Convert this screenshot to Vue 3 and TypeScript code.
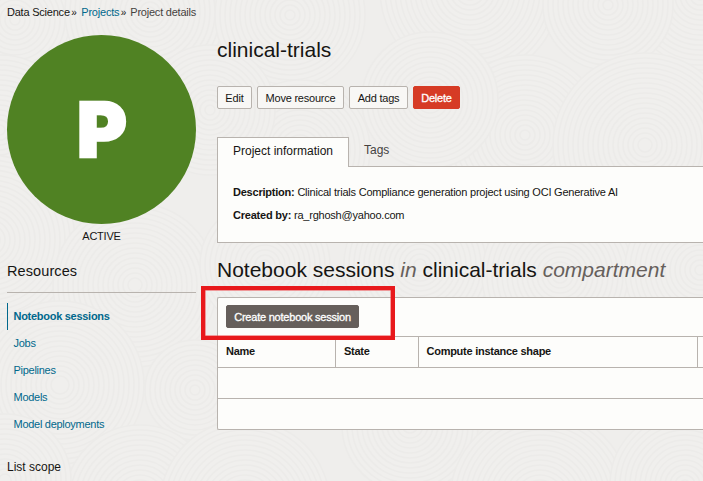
<script setup lang="ts">
interface Swirl { x: number; y: number; r: number }

const resources: string[] = ['Notebook sessions', 'Jobs', 'Pipelines', 'Models', 'Model deployments']
const actions: { label: string; kind: string }[] = [
  { label: 'Edit', kind: 'edit' },
  { label: 'Move resource', kind: 'move' },
  { label: 'Add tags', kind: 'tags' },
  { label: 'Delete', kind: 'danger' },
]
const columns: string[] = ['Name', 'State', 'Compute instance shape', '']

const swirls: Swirl[] = [
  { x: 15, y: 20, r: 80 }, { x: 150, y: 12, r: 85 }, { x: 290, y: 15, r: 75 }, { x: 470, y: -10, r: 90 },
  { x: 700, y: -5, r: 80 }, { x: 608, y: 5, r: 65 }, { x: 525, y: 135, r: 80 }, { x: 645, y: 145, r: 92 },
  { x: 430, y: 100, r: 68 }, { x: 300, y: 150, r: 70 }, { x: 210, y: 110, r: 65 }, { x: 0, y: 130, r: 75 },
  { x: -10, y: 240, r: 85 }, { x: 135, y: 285, r: 82 }, { x: 265, y: 265, r: 65 }, { x: 420, y: 265, r: 76 },
  { x: 560, y: 275, r: 78 }, { x: 700, y: 270, r: 75 }, { x: 60, y: 385, r: 84 }, { x: 195, y: 390, r: 50 },
  { x: 140, y: 500, r: 75 }, { x: 245, y: 505, r: 85 }, { x: 410, y: 425, r: 68 }, { x: 540, y: 500, r: 90 },
  { x: 685, y: 485, r: 75 }, { x: 5, y: 480, r: 66 },
]
const rings = (r: number): number[] => Array.from({ length: Math.floor(r / 5) }, (_, i) => r - i * 5)
</script>

<template>
  <div class="page">
    <svg class="texture" viewBox="0 0 703 481" aria-hidden="true">
      <g v-for="(s, i) in swirls" :key="i">
        <circle v-for="r in rings(s.r)" :key="r" :cx="s.x" :cy="s.y" :r="r" />
      </g>
    </svg>
    <nav class="crumbs">
      <span>Data Science</span><i>»</i><a>Projects</a><i>»</i><span class="here">Project details</span>
    </nav>
    <div class="body">
      <aside class="side">
        <div class="badge"><span>P</span></div>
        <div class="status">ACTIVE</div>
        <h2 class="side-title">Resources</h2>
        <ul class="menu">
          <li v-for="(r, i) in resources" :key="r" :class="{ active: i === 0 }"><a>{{ r }}</a></li>
        </ul>
        <h3 class="scope">List scope</h3>
      </aside>
      <main class="main">
        <h1 class="title">clinical-trials</h1>
        <div class="actions">
          <button v-for="a in actions" :key="a.label" class="btn" :class="a.kind">{{ a.label }}</button>
        </div>
        <div class="tabs">
          <div class="tab current">Project information</div>
          <div class="tab">Tags</div>
        </div>
        <section class="panel">
          <p><b>Description:</b> <span>Clinical trials Compliance generation project using OCI Generative AI</span></p>
          <p><b>Created by:</b> <span>ra_rghosh@yahoo.com</span></p>
        </section>
        <h2 class="heading">Notebook sessions <em>in</em> clinical-trials <em>compartment</em></h2>
        <section class="list">
          <div class="toolbar">
            <button class="btn create">Create notebook session</button>
            <div class="marker"></div>
          </div>
          <div class="row head"><div v-for="c in columns" :key="c" class="cell">{{ c }}</div></div>
          <div class="row"></div>
          <div class="row"></div>
        </section>
      </main>
    </div>
  </div>
</template>

<style>
body { margin: 0; overflow: hidden; background: #efeeec; }
</style>

<style scoped>
* { box-sizing: border-box; }
.page { position: relative; width: 703px; height: 481px; overflow: hidden; background: #efeeec; font: 11px/15px "Liberation Sans", Arial, sans-serif; letter-spacing: -.22px; color: #161513; }
.texture { position: absolute; inset: 0; width: 703px; height: 481px; }
.texture circle { fill: #f0efed; stroke: #ecebe9; stroke-width: 1.6; }
.crumbs { position: relative; display: flex; height: 35px; padding: 5px 0 0 7px; }
.crumbs i { font-style: normal; font-size: 10px; width: 11.5px; padding-left: 1.5px; }
.crumbs i:nth-of-type(2) { width: 11px; }
.crumbs .here { color: #45423f; }
a { color: #00688c; }
.body { position: relative; display: flex; gap: 21px; padding-left: 7px; width: 703px; }
.side { width: 189px; flex: none; }
.badge { display: flex; justify-content: center; align-items: center; width: 189px; height: 189px; padding: 0 0 2px 1px; border-radius: 50%; background: #508223; color: #fff; font: 900 76px/78px Inter, sans-serif; letter-spacing: 0; -webkit-text-stroke: 2.4px #fff; }
.status { text-align: center; margin-top: 5px; height: 15px; }
.side-title { margin: 17px 0 0; height: 32px; font-size: 14.5px; line-height: 20px; font-weight: 400; border-bottom: 1px solid #b8b3ae; letter-spacing: .1px; }
.menu { list-style: none; margin: 10px 0 0; padding: 0; letter-spacing: -.28px; }
.menu li { height: 27px; padding-left: 6.5px; line-height: 27px; }
.menu .active { border-left: 1px solid #00688c; padding-left: 5.5px; font-weight: 700; }
.scope { margin: 20px 0 0; font-size: 12px; line-height: 18px; font-weight: 400; letter-spacing: 0; }
.main { flex: 1; min-width: 0; }
.title { margin: 0; height: 51px; font-size: 21px; line-height: 30px; font-weight: 400; letter-spacing: 0; }
.actions { display: flex; gap: 5px; }
.btn { height: 23px; padding: 0; border: 1px solid #b8b3ae; border-radius: 2px; background: #f8f7f5; color: #161513; font: 11px/20px "Liberation Sans", Arial, sans-serif; letter-spacing: -.22px; text-align: center; white-space: nowrap; }
.edit { width: 35px; letter-spacing: -.1px; }
.move { width: 87px; }
.tags { width: 59px; }
.danger { width: 47px; background: #d63b25; border-color: #d63b25; color: #fff; -webkit-text-stroke: .3px #fff; }
.tabs { display: flex; height: 29px; margin-top: 28px; letter-spacing: 0; }
.tab { padding: 0 15px; font-size: 12px; line-height: 26px; color: #45423f; }
.current { width: 132px; height: 30px; line-height: 27px; border: 1px solid #b8b3ae; border-bottom: 0; background: #fdfdfb; color: #161513; position: relative; z-index: 1; white-space: nowrap; }
.panel { height: 77px; padding: 18px 15px 0; border: 1px solid #b8b3ae; border-right: 0; background: #fdfdfb; }
.panel p { margin: 0 0 8px; white-space: nowrap; }
.heading { margin: 12px 0 0; height: 42px; font-size: 21px; line-height: 30px; font-weight: 400; white-space: nowrap; letter-spacing: 0; }
.heading em { color: #66605c; }
.list { height: 133px; border: 1px solid #b8b3ae; border-right: 0; border-radius: 2px 0 0 2px; background: #fdfdfb; }
.toolbar { position: relative; height: 38px; padding: 7px 8px; }
.create { display: block; width: 133px; background: #665f5b; border-color: #665f5b; color: #fff; -webkit-text-stroke: .3px #fff; }
.marker { position: absolute; left: -17px; top: -12px; width: 194px; height: 54px; border: 4px solid #e8191c; box-shadow: inset 0 0 0 .5px #f04448; z-index: 2; }
.row { height: 31px; border-top: 1px solid #b8b3ae; }
.head { display: grid; grid-template-columns: 118px 83px 279px 1fr; font-weight: 700; letter-spacing: -.26px; }
.cell { border-right: 1px solid #b8b3ae; padding: 7px 8px 0; }
.cell:nth-child(3) { padding-left: 7.5px; }
.cell:last-child { border-right: 0; }
</style>
